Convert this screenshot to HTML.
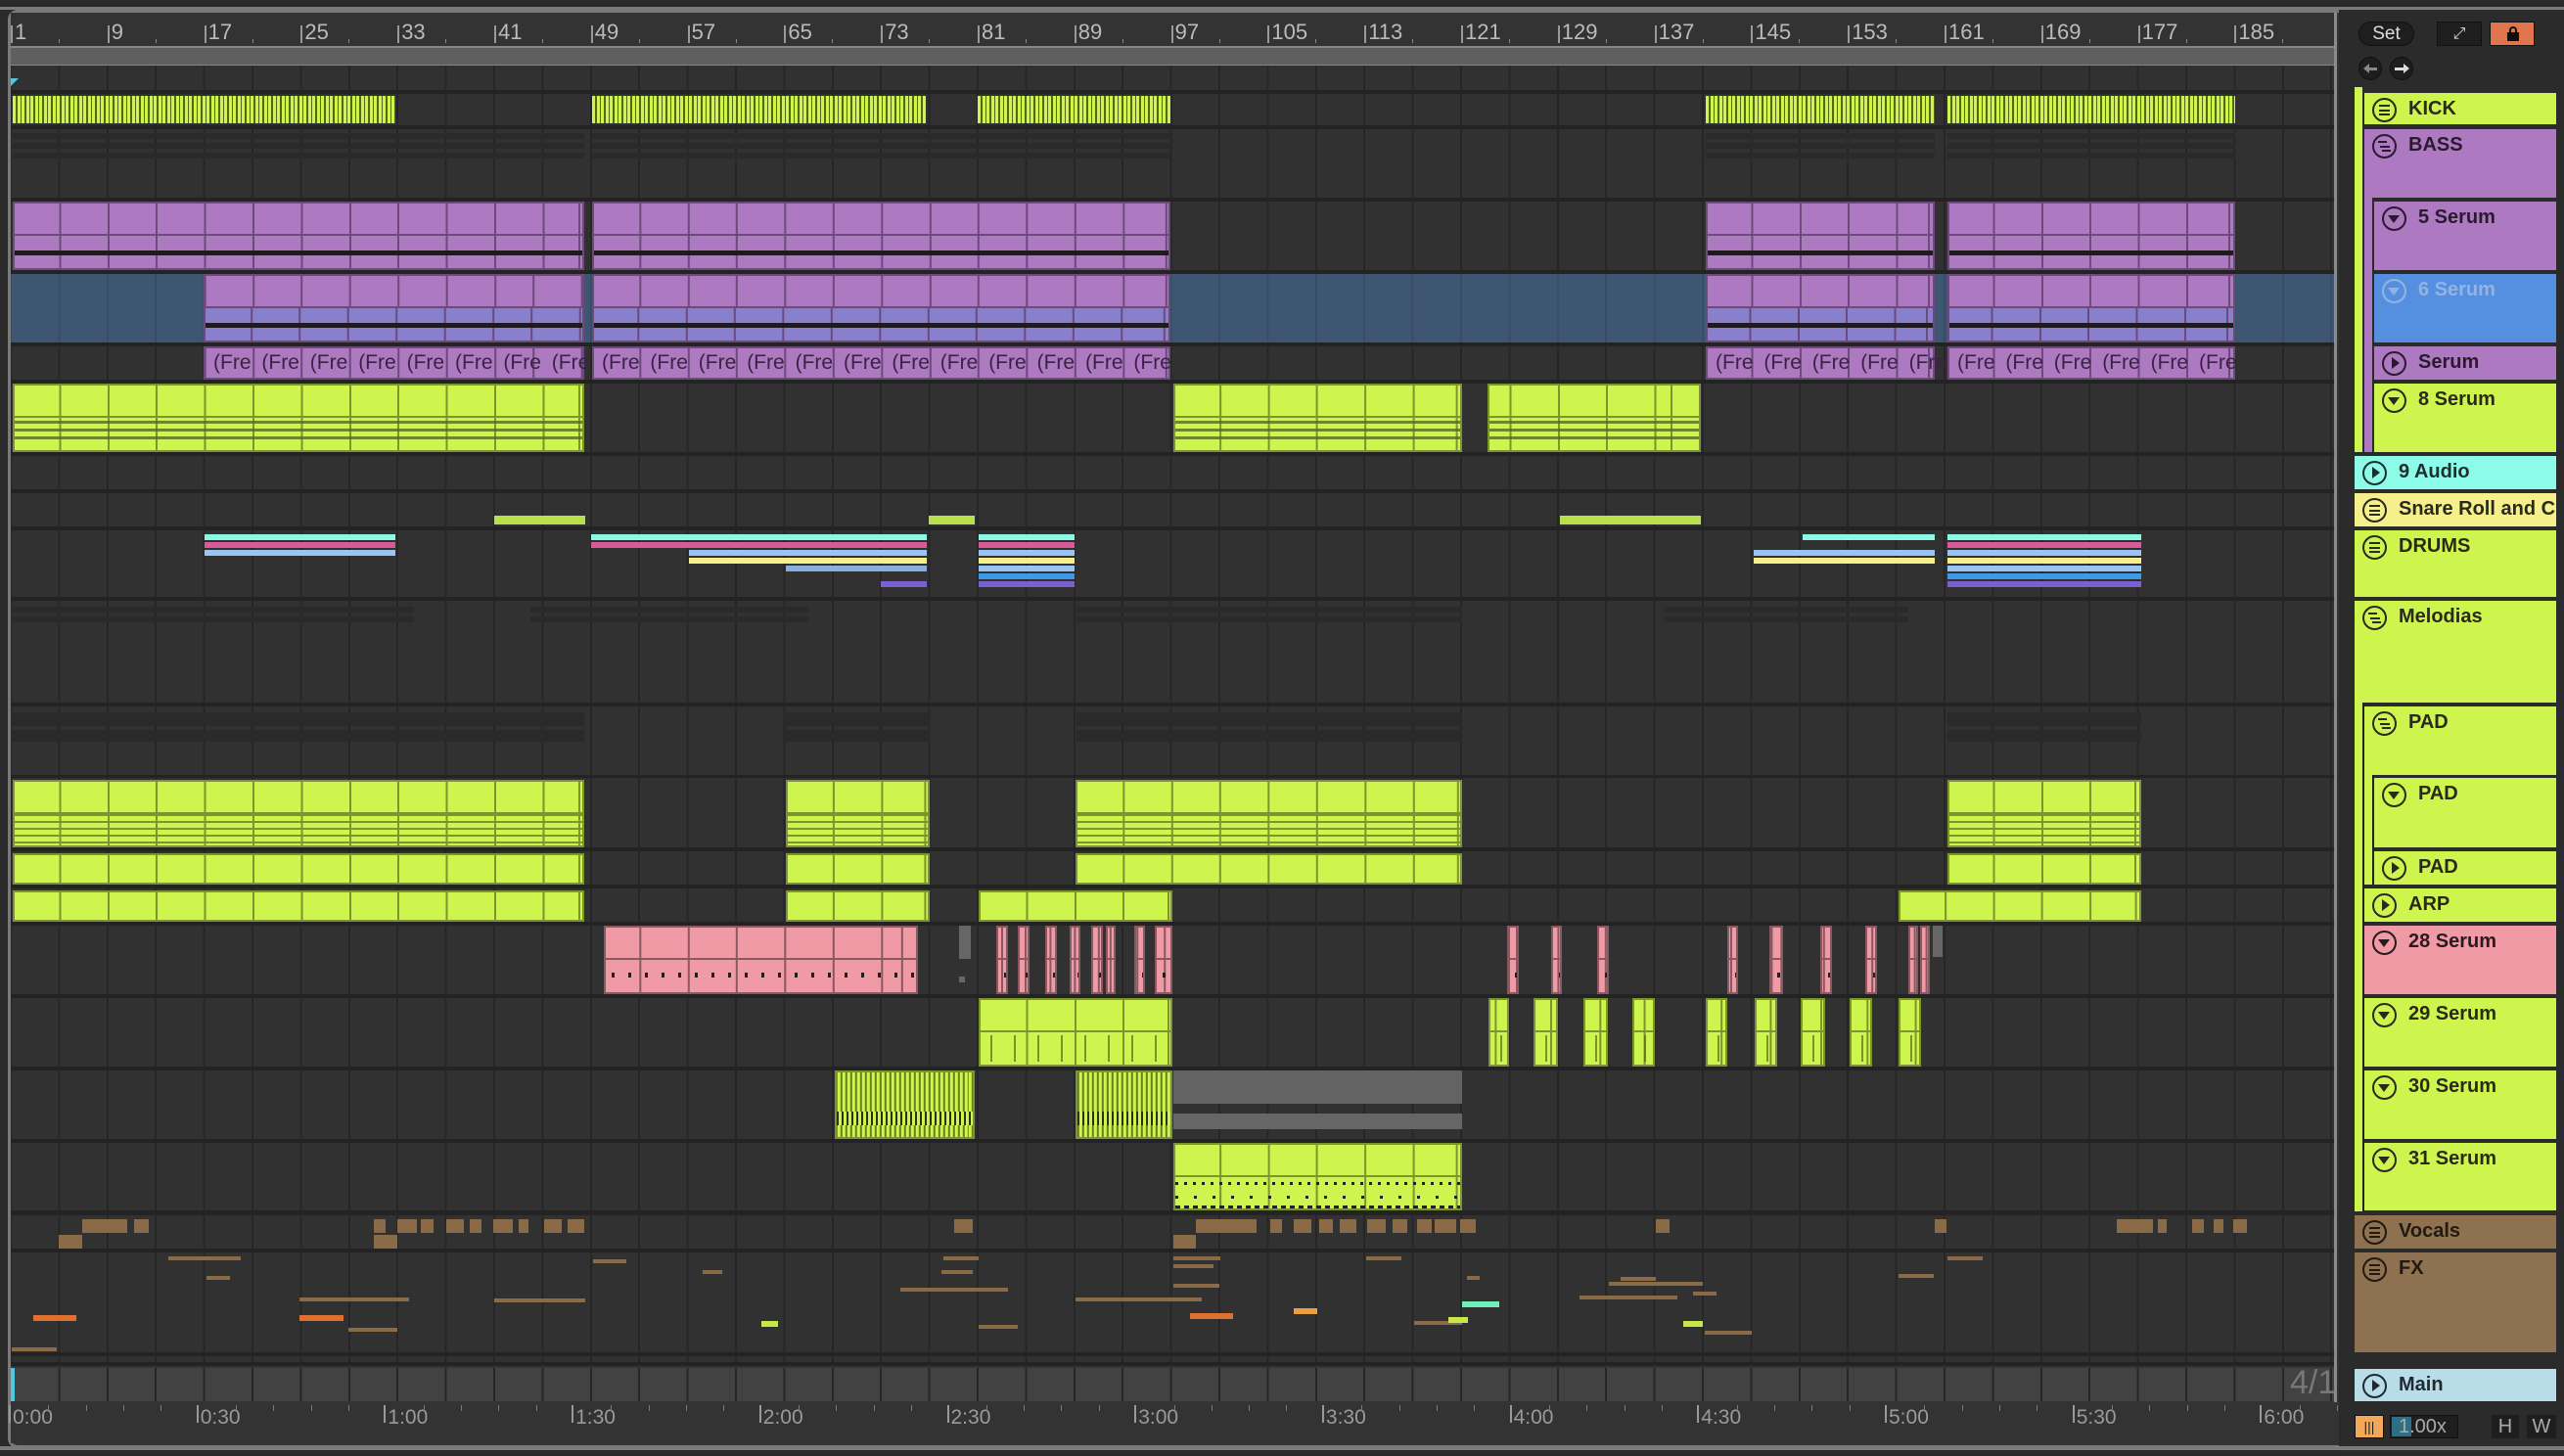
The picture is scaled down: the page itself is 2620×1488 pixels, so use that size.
<!DOCTYPE html>
<html><head><meta charset="utf-8">
<style>
*{margin:0;padding:0;box-sizing:border-box}
body{width:2620px;height:1488px;background:#2a2a2a;position:relative;overflow:hidden;font-family:"Liberation Sans",sans-serif}
.a{position:absolute}
.hd{position:absolute;font-weight:bold;font-size:20px;color:#2a2a1a;white-space:nowrap;overflow:hidden}
.hd span{position:absolute;top:5px}
.ic{position:absolute;left:8px;top:5px;width:25px;height:25px;border:2px solid #2a2a1a;border-radius:50%}
.rl{position:absolute;top:20px;font-size:22px;color:#bbb;font-family:"Liberation Sans Narrow","Liberation Sans",sans-serif}
.tl{position:absolute;top:1437px;font-size:21px;color:#9a9a9a}
</style></head><body>
<div class="a" style="left:8px;top:10px;width:2382px;height:1470px;border:3px solid #7a7a7a;border-right:none;border-radius:10px 0 0 10px;background:#333"></div>
<div class="a" style="left:11px;top:13px;width:2379px;height:1462px;background:#333"></div>
<div class="a" style="left:11px;top:47px;width:2376px;height:21px;background:#5f5f5f;border-top:2px solid #888;border-bottom:2px solid #888"></div>
<div id="arr" class="a" style="left:0;top:0;width:2620px;height:1488px"></div>
<div class="a" style="left:2392px;top:0;width:228px;height:1488px;background:#2b2b2b"></div>
<div class="a" style="left:0;top:0;width:2620px;height:10px;background:#2a2a2a;border-bottom:3px solid #7a7a7a"></div>
<div class="a" style="left:2410px;top:22px;width:57px;height:25px;border-radius:13px;background:#1e1e1e;border:1px solid #111;color:#ddd;font-size:19px;text-align:center;line-height:23px">Set</div>
<div class="a" style="left:2490px;top:22px;width:46px;height:25px;background:#1e1e1e;border:1px solid #111;color:#ddd;font-size:16px;text-align:center;line-height:23px">⤢</div>
<div class="a" style="left:2544px;top:22px;width:46px;height:25px;background:#e0744c;border:1px solid #111"><div class="a" style="left:17px;top:10px;width:12px;height:9px;background:#111"></div><div class="a" style="left:19px;top:4px;width:8px;height:8px;border:2px solid #111;border-bottom:none;border-radius:4px 4px 0 0"></div></div>
<div class="a" style="left:2410px;top:58px;width:24px;height:24px;border-radius:50%;background:#1e1e1e;border:1px solid #111">
 <div class="a" style="left:4px;top:6px;width:0;height:0;border-top:5px solid transparent;border-bottom:5px solid transparent;border-right:6px solid #888"></div>
 <div class="a" style="left:9px;top:9.5px;width:9px;height:3px;background:#888"></div></div>
<div class="a" style="left:2442px;top:58px;width:24px;height:24px;border-radius:50%;background:#1e1e1e;border:1px solid #111">
 <div class="a" style="left:13px;top:6px;width:0;height:0;border-top:5px solid transparent;border-bottom:5px solid transparent;border-left:6px solid #ddd"></div>
 <div class="a" style="left:4px;top:9.5px;width:9px;height:3px;background:#ddd"></div></div>
<div id="hdr"></div>
<div class="a" style="left:2406px;top:1446px;width:30px;height:24px;background:#f2a85a;border:1px solid #111;color:#222;font-size:14px;text-align:center;line-height:22px">|||</div>
<div class="a" style="left:2442px;top:1446px;width:70px;height:24px;background:#1e1e1e;border:1px solid #111;color:#aaa;font-size:20px;line-height:22px;padding-left:8px"><div class="a" style="left:1px;top:1px;width:20px;height:20px;background:#2f6f84"></div><span style="position:relative">1.00x</span></div>
<div class="a" style="left:2546px;top:1446px;width:28px;height:24px;background:#1e1e1e;color:#aaa;font-size:20px;text-align:center;line-height:24px">H</div>
<div class="a" style="left:2582px;top:1446px;width:30px;height:24px;background:#1e1e1e;color:#aaa;font-size:20px;text-align:center;line-height:24px">W</div>
<div class="a" style="left:0;top:1478px;width:2620px;height:4px;background:#7a7a7a"></div>
<script>
const A=document.getElementById('arr'),H=document.getElementById('hdr');
function d(p,x,y,w,h,bg,extra){const e=document.createElement('div');e.className='a';e.style.cssText=`left:${x}px;top:${y}px;width:${w}px;height:${h}px;background:${bg};${extra||''}`;p.appendChild(e);return e}
const X=b=>11+(b-1)*12.35;
const rows=[[67,92],[96,128],[132,202],[206,276],[280,350],[354,388],[392,462],[466,500],[504,538],[542,610],[614,718],[722,792],[795,866],[870,904],[908,942],[946,1016],[1020,1090],[1094,1164],[1168,1237],[1242,1276],[1280,1382],[1386,1392]];
d(A,11,67,2376,1329,'#232323');
const grid='repeating-linear-gradient(90deg,#262626 0 2px,transparent 2px 49.4px)';
const gridB='repeating-linear-gradient(90deg,rgba(0,0,0,0.12) 0 2px,transparent 2px 49.4px)';
rows.forEach((r,i)=>{d(A,11,r[0],2376,r[1]-r[0],i==4?'#3f5673':'#313131',`background-image:${i==4?gridB:grid};background-position:-1px 0`)});
d(A,11,1398,2376,34,'#424242',`background-image:${grid};background-position:-1px 0`);
d(A,11,1398,4,34,'#4cc8e0');
d(A,11,80,8,8,'#4cc8e0','clip-path:polygon(0 0,100% 0,0 100%)');
for(let b=1;b<=185;b+=8){const x=X(b);d(A,x,26,2,18,'#999');const t=document.createElement('div');t.className='rl';t.style.left=(x+4)+'px';t.textContent=b;A.appendChild(t);d(A,x+49,40,1,4,'#888')}
const tl=['0:00','0:30','1:00','1:30','2:00','2:30','3:00','3:30','4:00','4:30','5:00','5:30','6:00'];
tl.forEach((s,k)=>{const x=11+k*191.7;d(A,x-2,1436,2,18,'#999');const t=document.createElement('div');t.className='tl';t.style.left=(x+2)+'px';t.textContent=s;A.appendChild(t);for(let j=1;j<5;j++)d(A,x+j*38.3,1436,1,6,'#777')});
d(A,2385,13,3,1420,'#8a8a8a');
const f=document.createElement('div');f.className='a';f.style.cssText='left:2340px;top:1394px;font-size:34px;color:#777;font-family:"Liberation Sans Narrow",sans-serif';f.textContent='4/1';A.appendChild(f);
const L='#cdf54d',LD='#7d9430',P='#ad79c1',PD='#6c4a7c';
function clip(x1,x2,y1,y2,c,bd,split,bot,pat){const e=d(A,x1,y1,x2-x1,y2-y1,c,`border:2px solid ${bd};background-image:repeating-linear-gradient(90deg,${bd} 0 2px,transparent 2px 49.4px);background-position:${(11-x1)%49.4-2}px 0`);
 if(split){d(e,0,split,x2-x1-4,2,bd); if(bot)d(e,0,split+2,x2-x1-4,y2-y1-split-6,bot,`background-image:repeating-linear-gradient(90deg,${bd} 0 2px,transparent 2px 49.4px);background-position:${(11-x1)%49.4-4}px 0`);}
 if(pat)pat(e,x2-x1-4,y2-y1-4);return e}
[[13,404],[605,946],[999,1196],[1743,1977],[1990,2284]].forEach(([a,b])=>d(A,a,98,b-a,28,L,'background-image:repeating-linear-gradient(90deg,'+L+' 0 3px,#566619 3px 5px,'+L+' 5px 8px,#566619 8px 9px)'));
[[13,597],[605,1196],[1743,1977],[1990,2284]].forEach(([a,b])=>{d(A,a,136,b-a,6,'#2a2a2a');d(A,a,146,b-a,6,'#2a2a2a');d(A,a,156,b-a,6,'#2a2a2a')});
const blackline=(e,w,h)=>d(e,0,Math.round(h*0.72),w,5,'#1e1a20','background-image:repeating-linear-gradient(90deg,#1e1a20 0 40px,transparent 40px 42px,#1e1a20 42px 44px,transparent 44px 46px)');
[[13,597],[605,1196],[1743,1977],[1990,2284]].forEach(([a,b])=>clip(a,b,206,276,P,PD,31,null,blackline));
[[208,597],[605,1196],[1743,1977],[1990,2284]].forEach(([a,b])=>clip(a,b,280,350,P,PD,31,'#8880cc',blackline));
[[208,597],[605,1196],[1743,1977],[1990,2284]].forEach(([a,b])=>{const e=clip(a,b,354,388,P,PD);for(let x=a;x<b-20;x+=49.4){const t=document.createElement('div');t.className='a';t.style.cssText=`left:${x-a+8}px;top:3px;font-size:21px;color:#3a2244;white-space:nowrap;overflow:hidden;width:40px`;t.textContent='(Fre';e.appendChild(t)}});
const limeLines=(e,w,h)=>{for(let k=0;k<3;k++)d(e,0,Math.round(h*0.55)+k*8,w,3,'#5a6a1e','opacity:.8;background-image:repeating-linear-gradient(90deg,transparent 0 20px,#5a6a1e 20px 49px);')};
[[13,597],[1199,1494],[1520,1738]].forEach(([a,b])=>clip(a,b,392,462,L,LD,31,null,limeLines));
[[505,598],[949,996],[1594,1738]].forEach(([a,b])=>d(A,a,527,b-a,9,'#b8e04a'));
function dl(a,b,y,c){d(A,a,y,b-a,6,c)}
dl(209,404,546,'#8cf8e6');dl(209,404,554,'#d85a98');dl(209,404,562,'#9ac4f4');
dl(604,947,546,'#8cf8e6');dl(604,947,554,'#d85a98');dl(704,947,562,'#9ac4f4');dl(704,947,570,'#f5f08c');dl(803,947,578,'#8aaee0');dl(900,947,594,'#7a60d0');
dl(1000,1098,546,'#8cf8e6');dl(1000,1098,554,'#d85a98');dl(1000,1098,562,'#9ac4f4');dl(1000,1098,570,'#f5f08c');dl(1000,1098,578,'#9ac4f4');dl(1000,1098,586,'#3c9ae6');dl(1000,1098,594,'#7a60d0');
dl(1842,1977,546,'#8cf8e6');dl(1792,1977,562,'#9ac4f4');dl(1792,1977,570,'#f5f08c');
dl(1990,2188,546,'#8cf8e6');dl(1990,2188,554,'#d85a98');dl(1990,2188,562,'#9ac4f4');dl(1990,2188,570,'#f5f08c');dl(1990,2188,578,'#9ac4f4');dl(1990,2188,586,'#3c9ae6');dl(1990,2188,594,'#7a60d0');
[[11,423],[542,827],[1100,1494],[1700,1950]].forEach(([a,b])=>{d(A,a,620,b-a,6,'#2a2a2a');d(A,a,630,b-a,6,'#2a2a2a')});
[[11,597],[803,950],[1100,1494],[1990,2188]].forEach(([a,b])=>{d(A,a,728,b-a,14,'#2a2a2a');d(A,a,746,b-a,12,'#2a2a2a')});
const padLines=(e,w,h)=>{for(let k=0;k<5;k++)d(e,0,Math.round(h*0.5)+k*7,w,2,'#7d9430')};
[[13,597],[803,950],[1099,1494],[1990,2188]].forEach(([a,b])=>clip(a,b,797,866,L,LD,31,null,padLines));
[[13,597],[803,950],[1099,1494],[1990,2188]].forEach(([a,b])=>clip(a,b,872,904,L,LD));
[[13,597],[803,950],[1000,1198],[1940,2188]].forEach(([a,b])=>clip(a,b,910,942,L,LD));
const PK='#f09aa6',PKD='#8a5860';
const pinkTicks=(e,w,h)=>d(e,0,Math.round(h*0.7),w,5,'transparent','background-image:repeating-linear-gradient(90deg,transparent 0 6px,#2a1a1e 6px 9px,transparent 9px 17px)');
clip(617,938,946,1016,PK,PKD,31,null,pinkTicks);
d(A,980,946,12,34,'#666');d(A,980,998,6,6,'#666');
[[1018,1030],[1040,1052],[1068,1080],[1093,1104],[1115,1127],[1130,1140],[1159,1170],[1180,1198],[1540,1552],[1585,1596],[1632,1644],[1765,1776],[1808,1822],[1860,1872],[1906,1918],[1950,1960],[1962,1972]].forEach(([a,b])=>clip(a,b,946,1016,PK,PKD,31,null,pinkTicks));
d(A,1975,946,10,32,'#666');
const dots=(e,w,h)=>d(e,0,h*0.55,w,h*0.4,'transparent','background-image:repeating-linear-gradient(90deg,transparent 0 10px,#556a18 10px 12px,transparent 12px 24px);opacity:.7');
clip(1000,1198,1020,1090,L,LD,31,null,dots);
[[910,923],[938,953],[968,983],[998,1012],[1043,1056],[1073,1087],[1101,1116],[1131,1145],[1161,1175]].forEach(([a,b])=>clip(a*1.671,b*1.671,1020,1090,L,LD,31,null,dots));
const stripe=(e,w,h)=>{e.style.backgroundImage='repeating-linear-gradient(90deg,'+L+' 0 3px,#6a8020 3px 5px)';d(e,0,h*0.6,w,14,'transparent','background-image:repeating-linear-gradient(90deg,#2a3010 0 2px,'+L+' 2px 5px)')};
clip(853,996,1094,1164,L,LD,null,null,stripe);
clip(1099,1198,1094,1164,L,LD,null,null,stripe);
d(A,1199,1094,295,34,'#636363');d(A,1199,1138,295,16,'#666');
clip(1199,1494,1168,1237,L,LD,31,null,(e,w,h)=>{d(e,0,38,w,3,'transparent','background-image:repeating-linear-gradient(90deg,#222 0 3px,transparent 3px 9px)');d(e,0,52,w,3,'transparent','background-image:repeating-linear-gradient(90deg,#222 0 3px,transparent 3px 19px)');d(e,0,62,w,3,'transparent','background-image:repeating-linear-gradient(90deg,#222 0 5px,transparent 5px 9px)')});
const BR='#8b6a48';
[[84,130,1246],[137,152,1246],[60,84,1262],[382,394,1246],[406,426,1246],[430,443,1246],[456,474,1246],[480,492,1246],[504,524,1246],[530,540,1246],[556,574,1246],[580,597,1246],[382,406,1262],[975,994,1246],[1222,1284,1246],[1298,1310,1246],[1322,1340,1246],[1348,1362,1246],[1369,1386,1246],[1397,1416,1246],[1423,1438,1246],[1448,1463,1246],[1466,1488,1246],[1492,1508,1246],[1199,1222,1262],[1692,1706,1246],[1977,1989,1246],[2163,2200,1246],[2205,2214,1246],[2240,2252,1246],[2262,2272,1246],[2282,2296,1246]].forEach(([a,b,y])=>d(A,a,y,b-a,14,BR));
[[172,246,1284],[211,235,1304],[12,58,1377],[34,78,1344,'#e07030'],[306,351,1344,'#e07030'],[306,418,1326],[356,406,1357],[606,640,1287],[718,738,1298],[505,598,1327],[1000,1040,1354],[1199,1247,1284],[1199,1240,1292],[1199,1246,1312],[1099,1228,1326],[1216,1260,1342,'#e07030'],[1322,1346,1337,'#e8a040'],[1396,1432,1284],[1445,1494,1350],[1480,1500,1346,'#c8e84a'],[1494,1532,1330,'#6ef0b8'],[1656,1692,1305],[1644,1740,1310],[1614,1714,1324],[1730,1754,1320],[1742,1790,1360],[1720,1740,1350,'#c8e84a'],[1940,1976,1302],[1990,2026,1284],[778,795,1350,'#c8e84a'],[964,1000,1284],[920,1030,1316],[962,994,1298],[1499,1512,1304]].forEach(([a,b,y,c])=>d(A,a,y,b-a,c?6:4,c||'#8b6a48'));
const DK='#2a2a1a';
function hdr(t,b,l,c,ic,txt,tc,icc){const e=d(H,l,t,2612-l,b-t,c);e.className='hd';e.style.color=tc||DK;
 const i=document.createElement('div');i.className='ic';i.style.borderColor=icc||tc||DK;e.appendChild(i);
 const col=icc||tc||DK;
 if(ic=='g'){i.innerHTML=`<div class="a" style="left:5px;top:5px;width:11px;height:2px;background:${col}"></div><div class="a" style="left:5px;top:9.5px;width:11px;height:2px;background:${col}"></div><div class="a" style="left:5px;top:14px;width:11px;height:2px;background:${col}"></div>`}
 else if(ic=='G'){i.innerHTML=`<div class="a" style="left:4px;top:5px;width:9px;height:2px;background:${col}"></div><div class="a" style="left:6px;top:9.5px;width:10px;height:2px;background:${col}"></div><div class="a" style="left:8px;top:14px;width:9px;height:2px;background:${col}"></div>`}
 else if(ic=='d'){i.innerHTML=`<div class="a" style="left:4px;top:7px;width:0;height:0;border-left:6.5px solid transparent;border-right:6.5px solid transparent;border-top:8px solid ${col}"></div>`}
 else {i.innerHTML=`<div class="a" style="left:8px;top:4px;width:0;height:0;border-top:6.5px solid transparent;border-bottom:6.5px solid transparent;border-left:8px solid ${col}"></div>`}
 const s=document.createElement('span');s.style.left='45px';s.textContent=txt;e.appendChild(s);}
d(H,2406,89,8,373,L);d(H,2416,190,8,272,P);
hdr(95,127,2416,L,'g','KICK');
hdr(132,202,2416,P,'G','BASS','#2a1a30');
hdr(206,276,2426,P,'d','5 Serum','#2a1a30');
hdr(280,350,2426,'#5590e0','d','6 Serum','#93b3e2');
hdr(354,388,2426,P,'p','Serum','#2a1a30');
hdr(392,462,2426,L,'d','8 Serum');
hdr(466,500,2406,'#8cfbe8','p','9 Audio','#1a3030');
hdr(504,538,2406,'#f5f08c','g','Snare Roll and C','#2a2a1a');
hdr(542,610,2406,L,'g','DRUMS');
hdr(614,718,2406,L,'G','Melodias');
d(H,2406,718,8,520,L);d(H,2414,718,2,520,'#222');d(H,2416,792,8,112,L);d(H,2424,792,2,112,'#222');
hdr(722,792,2416,L,'G','PAD');
hdr(795,866,2426,L,'d','PAD');
hdr(870,904,2426,L,'p','PAD');
hdr(908,942,2416,L,'p','ARP');
hdr(946,1016,2416,PK,'d','28 Serum','#2a1a1e');
hdr(1020,1090,2416,L,'d','29 Serum');
hdr(1094,1164,2416,L,'d','30 Serum');
hdr(1168,1237,2416,L,'d','31 Serum');
hdr(1242,1276,2406,'#8d7150','g','Vocals','#221a10');
hdr(1280,1382,2406,'#8d7150','g','FX','#221a10');
hdr(1399,1432,2406,'#b8dde8','p','Main','#1e2a30');
</script>
</body></html>
